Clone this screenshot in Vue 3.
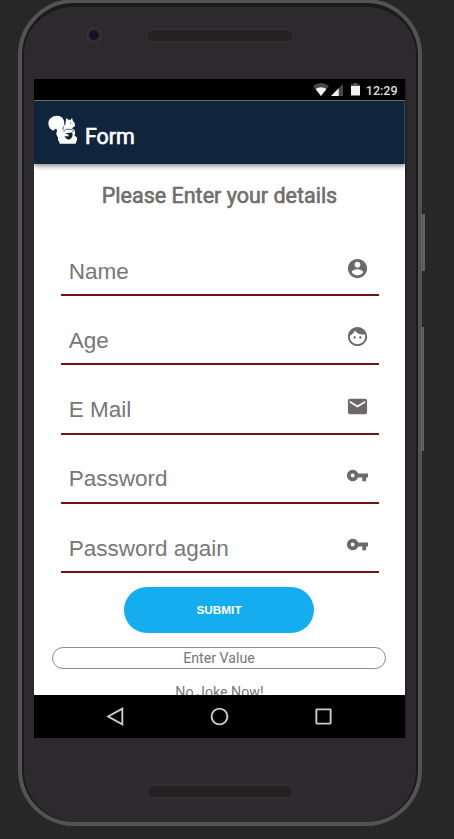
<script setup>
const fields = [
  { label: 'Name', type: 'text', icon: 'M12 2C6.48 2 2 6.48 2 12s4.48 10 10 10 10-4.48 10-10S17.52 2 12 2zm0 3c1.66 0 3 1.34 3 3s-1.34 3-3 3-3-1.34-3-3 1.34-3 3-3zm0 14.2c-2.5 0-4.71-1.28-6-3.22.03-1.99 4-3.08 6-3.08 1.99 0 5.97 1.09 6 3.08-1.29 1.94-3.5 3.22-6 3.22z' },
  { label: 'Age', type: 'text', icon: 'M9 11.75c-.69 0-1.25.56-1.25 1.25s.56 1.25 1.25 1.25 1.25-.56 1.25-1.25-.56-1.25-1.25-1.25zm6 0c-.69 0-1.25.56-1.25 1.25s.56 1.25 1.25 1.25 1.25-.56 1.25-1.25-.56-1.25-1.25-1.25zM12 2C6.48 2 2 6.48 2 12s4.48 10 10 10 10-4.48 10-10S17.52 2 12 2zm0 18c-4.41 0-8-3.59-8-8 0-.29.02-.58.05-.86 2.36-1.05 4.23-2.98 5.21-5.37C11.07 8.33 14.05 10 17.42 10c.78 0 1.53-.09 2.25-.26.21.71.33 1.47.33 2.26 0 4.41-3.59 8-8 8z' },
  { label: 'E Mail', type: 'email', icon: 'M20 4H4c-1.1 0-1.99.9-1.99 2L2 18c0 1.1.9 2 2 2h16c1.1 0 2-.9 2-2V6c0-1.1-.9-2-2-2zm0 4l-8 5-8-5V6l8 5 8-5v2z' },
  { label: 'Password', type: 'password', icon: 'M12.65 10C11.83 7.67 9.61 6 7 6c-3.31 0-6 2.69-6 6s2.69 6 6 6c2.61 0 4.83-1.67 5.65-4H17v4h4v-4h2v-4H12.65zM7 14c-1.1 0-2-.9-2-2s.9-2 2-2 2 .9 2 2-.9 2-2 2z' },
  { label: 'Password again', type: 'password', icon: 'M12.65 10C11.83 7.67 9.61 6 7 6c-3.31 0-6 2.69-6 6s2.69 6 6 6c2.61 0 4.83-1.67 5.65-4H17v4h4v-4h2v-4H12.65zM7 14c-1.1 0-2-.9-2-2s.9-2 2-2 2 .9 2 2-.9 2-2 2z' },
]
</script>

<template>
  <main class="stage">
    <div class="phone">
      <i class="side power"></i>
      <i class="side volume"></i>
      <div class="bezel top">
        <i class="camera"></i>
        <i class="speaker"></i>
      </div>
      <div class="screen">
        <div class="status">
          <svg class="wifi" viewBox="0 0 16 13"><path d="M0 3Q8-3 16 3L8 13z" fill="#484848" /><path d="M2.500 6Q8 2.500 13.500 6L8 13z" fill="#f2f2f2" /></svg>
          <svg class="signal" viewBox="0 0 12 12"><path d="M12 0v12H0z" fill="#484848" /><path d="M7.700 4.300V12H0z" fill="#f2f2f2" /></svg>
          <svg class="battery" viewBox="0 0 9 13"><path d="M2.500 0h4v1.500H9V4H0V1.500h2.500z" fill="#555" /><path d="M0 3h9v9.500H0z" fill="#f0f0f0" /></svg>
          <span class="clock">12:29</span>
        </div>
        <header class="toolbar">
          <svg class="logo" viewBox="0 0 30 30">
            <path fill="#fff" d="M11.500 28.800V27C9.500 26 10 24 10 22.500C8 20 8 18 9 16C9 13.500 7.500 12.500 6 15.500C2.500 15 .4 12 .4 8.500C.4 4 4.500 .8 9 .8C13.500 .8 16.300 4 16.300 8C16.300 9.500 16 10.500 15.200 11.500L17.500 9L18 3L20 4.500L22.500 5L24 3L25 6C26.500 7.500 27.500 9 26.800 11.200C25.500 12.500 24 12.800 24 13.500C27 14.500 27.800 17 26.500 20.500L29 22.500C29.500 25 28.300 26.500 27.500 28.800Z" />
            <path fill="#10243c" d="M17.200 18.200L24.300 17.500C25.300 21.500 23.500 23.500 20.800 24.800C18 23.800 16.500 22.500 16.700 21L19.500 21.500L21 20Z" />
            <path fill="none" stroke="#10243c" stroke-width=".7" d="M16 17C15.800 14 18.500 14.300 21 14.200C24 14.300 25.500 14.500 25 17M15.500 11.500L14.800 15" />
            <circle cx="22.800" cy="8" r=".6" fill="#10243c" />
          </svg>
          <h1>Form</h1>
        </header>
        <form class="content" @submit.prevent>
          <h2>Please Enter your details</h2>
          <label v-for="field in fields" :key="field.label" class="field">
            <input :type="field.type" :placeholder="field.label" />
            <svg viewBox="0 0 24 24"><path :d="field.icon" /></svg>
          </label>
          <button class="submit">SUBMIT</button>
          <div class="value">Enter Value</div>
          <p class="note">No Joke Now!</p>
        </form>
        <nav class="nav">
          <svg viewBox="0 0 20 20"><path d="M16.500 2.500v15L3 10z" /></svg>
          <svg viewBox="0 0 20 20"><circle cx="10" cy="10" r="7.500" /></svg>
          <svg viewBox="0 0 20 20"><rect x="3.200" y="3.200" width="13.600" height="13.600" rx=".5" /></svg>
        </nav>
      </div>
      <div class="bezel bottom"><i class="speaker"></i></div>
    </div>
  </main>
</template>

<style>
body { margin: 0; background: #272727; overflow: hidden; }
</style>

<style scoped>
* { box-sizing: border-box; }
.stage { width: 454px; height: 839px; background: #272727; overflow: hidden; display: flex; padding-left: 18px; font-family: Roboto, sans-serif; }
.phone { position: relative; flex: none; width: 404px; height: 827px; margin-top: -1px; border: 4px solid #535353; border-radius: 56px; background: #2d2a2d; box-shadow: inset 2px 0 #1b1b1b, inset -2px 0 #1b1b1b, inset 0 4px 0 #1b1b1b; display: flex; flex-direction: column; }
.side { position: absolute; left: 399px; background: #606060; }
.power { top: 211px; width: 4px; height: 57px; }
.volume { top: 324px; width: 3px; height: 124px; }
.bezel { display: flex; justify-content: center; flex: none; }
.top { height: 76px; padding-top: 27px; position: relative; }
.bottom { flex: 1; padding-top: 48px; }
.camera { position: absolute; left: 64px; top: 24px; width: 16px; height: 16px; border: 3px solid #303030; border-radius: 50%; background: #180e28; }
.speaker { width: 144px; height: 11px; border-radius: 6px; background: #232122; box-shadow: 0 0 0 2px #302e30; }
.screen { width: 371px; height: 659px; margin-left: 12px; flex: none; background: #fff; box-shadow: 2px 0 #242225; display: flex; flex-direction: column; }
.status { height: 21px; flex: none; background: #000; display: flex; align-items: flex-start; justify-content: flex-end; padding: 4px 7.5px 0 0; }
.wifi { width: 16px; height: 13px; margin-right: 1px; }
.signal { width: 12px; height: 12px; margin: 1px 8px 0 1px; }
.battery { width: 9px; height: 13px; margin-right: 6px; }
.clock { font-size: 12.5px; line-height: 15px; color: #ddd; font-weight: 500; }
.toolbar { height: 64px; flex: none; position: relative; background: #10243c; border-top: 1px solid #6b6b6d; border-right: 1px solid #31465a; box-shadow: 0 2px 5px #0007; clip-path: inset(0 0 -10px 0); display: flex; align-items: flex-start; padding: 14px 0 0 14px; }
.logo { width: 30px; height: 30px; }
h1 { margin: 8px 0 0 7px; font-size: 21.4px; line-height: 28px; font-weight: 400; color: #fff; -webkit-text-stroke: .7px #fff; }
.content { height: 531px; overflow: hidden; display: flex; flex-direction: column; align-items: center; flex: none; }
h2 { margin: 18px 0 29px; height: 27px; font-size: 21.5px; line-height: 28px; font-weight: 400; color: #6e6e6e; -webkit-text-stroke: .6px #6e6e6e; white-space: nowrap; flex: none; }
.field { width: 318.5px; height: 69.25px; border-bottom: 2.25px solid #741316; margin-left: .5px; display: flex; align-items: flex-start; padding: 28.75px 9.75px 0 8.25px; flex: none; }
.field:first-of-type { height: 58px; padding-top: 18px; }
input { width: 260px; height: 32px; border: 0; padding: 0; background: none; font: 22.5px/32px "Liberation Sans", Arial, sans-serif; outline: 0; }
input::placeholder { color: #777; opacity: 1; }
.field svg { width: 23px; height: 23px; margin: .5px 0 0 auto; fill: #6b6969; flex: none; }
.submit { width: 190px; height: 46px; border: 0; border-radius: 23px; margin: 14px 1px 0 0; background: #14adf0; color: #fff; font: bold 11.8px "Liberation Sans", Arial, sans-serif; flex: none; }
.value { width: 334px; height: 22px; border: 1px solid #8c8c8c; border-radius: 11px; margin: 13.5px 1px 0 0; text-align: center; font-size: 14.2px; line-height: 21px; color: #777; flex: none; }
.note { margin: 13px 0 0; font-size: 14.2px; line-height: 21px; color: #777; flex: none; }
.nav { height: 43px; flex: none; background: #000; display: flex; justify-content: space-between; padding: 11px 71px 0; }
.nav svg { width: 21px; height: 21px; fill: none; stroke: #ccc; stroke-width: 1.8; }
</style>
